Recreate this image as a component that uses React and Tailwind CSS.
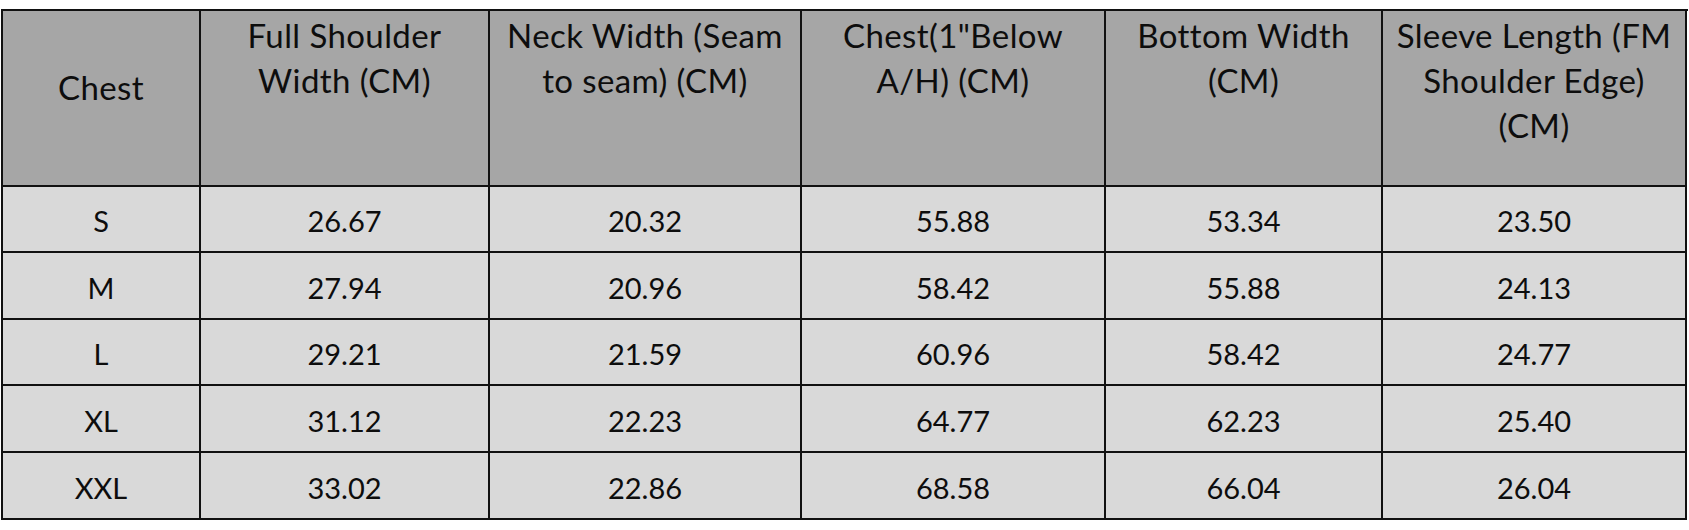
const headers = [
  { lines: ["Chest"], middle: true },
  { lines: ["Full Shoulder", "Width (CM)"] },
  { lines: ["Neck Width (Seam", "to seam) (CM)"] },
  { lines: ['Chest(1"Below', "A/H) (CM)"] },
  { lines: ["Bottom Width", "(CM)"] },
  { lines: ["Sleeve Length (FM", "Shoulder Edge)", "(CM)"] },
];

const rows = [
  ["S", "26.67", "20.32", "55.88", "53.34", "23.50"],
  ["M", "27.94", "20.96", "58.42", "55.88", "24.13"],
  ["L", "29.21", "21.59", "60.96", "58.42", "24.77"],
  ["XL", "31.12", "22.23", "64.77", "62.23", "25.40"],
  ["XXL", "33.02", "22.86", "68.58", "66.04", "26.04"],
];

export default function App() {
  return (
    <div className="bg-white w-[1689px] h-[530px] pt-[9px] pl-px font-['Lato',sans-serif] text-[#0d0d0d]">
      <div className="grid w-[1687px] grid-cols-[198px_289px_312px_304px_277px_304px] grid-rows-[176px_66px_67px_66px_67px_67px] border-l-2 border-t-2 border-[#111]">
        {headers.map((h) => (
          <div
            key={h.lines[0]}
            className={
              "flex flex-col border-r-2 border-b-2 border-[#111] bg-[#a6a6a6] text-center text-[33px] leading-[45px] tracking-[0.4px] whitespace-nowrap " +
              (h.middle ? "justify-center pb-[22px]" : "justify-start pt-[2px]")
            }
          >
            {h.lines.map((l) => (
              <span key={l}>{l}</span>
            ))}
          </div>
        ))}
        {rows.map((r) =>
          r.map((v, i) => (
            <div
              key={r[0] + i}
              className="flex items-center justify-center border-r-2 border-b-2 border-[#111] bg-[#d9d9d9] pt-1 text-[29px]"
            >
              {v}
            </div>
          ))
        )}
      </div>
    </div>
  );
}
